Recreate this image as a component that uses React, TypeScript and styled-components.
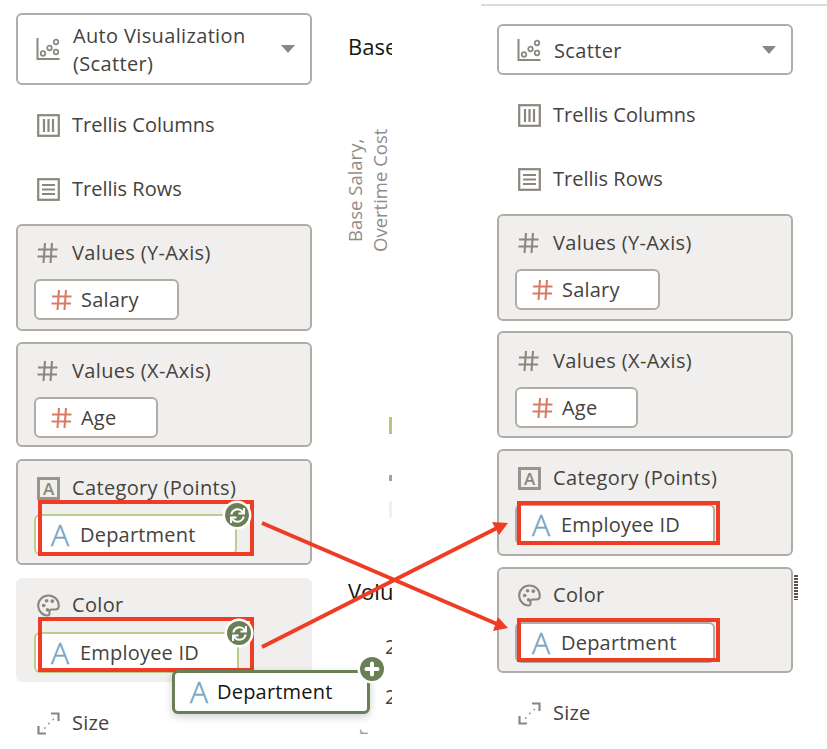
import * as React from 'react';
import styled, { createGlobalStyle } from 'styled-components';
import { FaSync } from 'react-icons/fa';

const Global = createGlobalStyle`
  html, body {
    margin: 0;
    height: 749px;
    overflow: hidden;
    background: #fff;
    font-family: 'Open Sans', 'Noto Sans', sans-serif;
  }
`;

const Page = styled.div`
  position: relative;
  display: flex;
  align-items: flex-start;
  width: 827px;
  height: 749px;
  overflow: hidden;
`;

const Panel = styled.div`
  display: flex;
  flex-direction: column;
  flex: none;
  width: 296px;
  margin-left: 16px;
  padding-top: 13px;
`;

const RightPanel = styled(Panel)`
  width: 330px;
  margin-left: 89px;
  margin-top: 4px;
  padding: 18px 0 0 16px;
  border-top: 2px solid #dcdad5;
`;

const Select = styled.div<{ $tall?: boolean }>`
  display: flex;
  align-items: center;
  box-sizing: border-box;
  width: 296px;
  height: ${p => (p.$tall ? 72 : 51)}px;
  margin-bottom: 8px;
  padding: 0 15px 0 18px;
  background: #fff;
  border: 2px solid #b0ada6;
  border-radius: 6px;
`;

const Label = styled.span`
  font-size: 20px;
  line-height: 30px;
  letter-spacing: 0.2px;
  color: #45423e;
`;

const SelectLabel = styled(Label)`
  flex: 1;
  margin-left: 13px;
  padding-top: 2px;
  line-height: 28px;
  letter-spacing: 0.35px;
`;

const Caret = styled.div`
  width: 0;
  height: 0;
  border-left: 7.5px solid transparent;
  border-right: 7.5px solid transparent;
  border-top: 8px solid #8a877f;
`;

const Row = styled.div`
  display: flex;
  align-items: center;
  flex: none;
  height: 64px;
  padding-left: 21px;
  gap: 12px;
`;

const RowLabel = styled(Label)`
  letter-spacing: 0;
`;

const Card = styled.div<{ $height: number; $gap: number; $flat?: boolean }>`
  position: relative;
  box-sizing: border-box;
  width: 296px;
  height: ${p => p.$height}px;
  margin-top: ${p => p.$gap}px;
  background: #f0efed;
  border: 2px solid ${p => (p.$flat ? 'transparent' : '#b0ada6')};
  border-radius: 6px;
`;

const CardHead = styled(Row)<{ $top?: number }>`
  height: 30px;
  padding-left: 19px;
  margin-top: ${p => p.$top ?? 12}px;
`;

const HeadLabel = styled(Label)`
  letter-spacing: 0.35px;
`;

const HeadSlot = styled.div`
  display: flex;
  flex: none;
  width: 23px;
`;

const Pill = styled.div<{ $width: number; $top?: number; $tone?: 'plain' | 'drop' }>`
  position: relative;
  display: flex;
  align-items: center;
  gap: 9px;
  box-sizing: border-box;
  width: ${p => p.$width}px;
  height: 41px;
  margin: ${p => p.$top ?? 11}px 0 0 16px;
  padding-left: 15px;
  background: #fff;
  border: 2px solid ${p => (p.$tone === 'drop' ? '#b9cd8c' : '#b0ada6')};
  border-radius: 6px;
`;

const TypeLetter = styled.span`
  flex: none;
  width: 20px;
  font-size: 30px;
  font-weight: 300;
  line-height: 32px;
  color: #74a5c0;
  -webkit-text-stroke: 0.5px #74a5c0;
`;

const BoxedLetter = styled.span`
  display: flex;
  align-items: center;
  justify-content: center;
  box-sizing: border-box;
  width: 23px;
  height: 23px;
  border: 3px solid #98958d;
  font-size: 17px;
  font-weight: 600;
  line-height: 17px;
  color: #8a877f;
`;

const Highlight = styled.div<{ $left: number; $top: number; $width: number; $height: number }>`
  position: absolute;
  box-sizing: border-box;
  left: ${p => p.$left}px;
  top: ${p => p.$top}px;
  width: ${p => p.$width}px;
  height: ${p => p.$height}px;
  border: 4px solid #ee3d24;
  pointer-events: none;
`;

const Badge = styled.div<{ $left: number; $top: number }>`
  position: absolute;
  z-index: 3;
  left: ${p => p.$left}px;
  top: ${p => p.$top}px;
  display: flex;
  align-items: center;
  justify-content: center;
  width: 24px;
  height: 24px;
  border-radius: 50%;
  background: #6b7f56;
  box-shadow: 0 0 0 2.5px #fff;
  color: #fff;
`;

const Ghost = styled.div`
  position: absolute;
  z-index: 2;
  left: 136px;
  top: 36px;
  display: flex;
  align-items: center;
  gap: 7px;
  box-sizing: border-box;
  width: 198px;
  height: 44px;
  padding-left: 15px;
  background: #fff;
  border: 3px solid #6b7f56;
  border-radius: 6px;
  box-shadow: 0 3px 8px rgba(0, 0, 0, 0.18);
`;

const GhostLabel = styled(Label)`
  color: #161513;
`;

const Grip = styled.div`
  position: absolute;
  left: calc(100% + 3px);
  top: 6px;
  width: 4px;
  height: 25px;
  background: repeating-linear-gradient(180deg, #55524e 0 2px, transparent 2px 3px);
`;

const ChartStrip = styled.div`
  display: flex;
  flex-direction: column;
  flex: none;
  width: 47px;
  height: 749px;
  margin-left: 33px;
  overflow: hidden;
`;

const ChartTitle = styled.div<{ $gap: number }>`
  margin: ${p => p.$gap}px 0 0 3px;
  font-size: 22px;
  line-height: 26px;
  color: #161513;
  white-space: nowrap;
`;

const AxisLabel = styled.div`
  flex: none;
  height: 125px;
  margin-top: 69px;
  margin-left: -3px;
  writing-mode: vertical-rl;
  transform: rotate(180deg);
  align-self: flex-start;
  text-align: center;
  font-size: 18.5px;
  line-height: 25px;
  color: #8f8d88;
  white-space: nowrap;
`;

const Tick = styled.div<{ $gap: number; $height: number; $color: string }>`
  flex: none;
  align-self: flex-end;
  width: 3px;
  height: ${p => p.$height}px;
  margin-top: ${p => p.$gap}px;
  background: ${p => p.$color};
`;

const AxisValue = styled.div<{ $gap: number }>`
  flex: none;
  margin: ${p => p.$gap}px 0 0 40px;
  font-size: 20px;
  line-height: 20px;
  color: #45423e;
`;

const AxisStub = styled.div`
  flex: none;
  height: 11px;
  margin: 17px 0 0 12px;
  overflow: hidden;
  writing-mode: vertical-rl;
  transform: rotate(180deg);
  align-self: flex-start;
  font-size: 14px;
  line-height: 11px;
  color: #8f8d88;
`;

const Arrows = styled.svg`
  position: absolute;
  z-index: 4;
  left: 0;
  top: 0;
  pointer-events: none;
`;

const stroke = '#8a877f';

const ScatterIcon = () => (
  <svg width="24" height="24" viewBox="0 0 24 24" fill="none" stroke={stroke} style={{ flex: 'none' }}>
    <path d="M1.5 1v21h22" strokeWidth="2" />
    <circle cx="7" cy="16.5" r="2.3" strokeWidth="1.7" />
    <circle cx="13.5" cy="11" r="2.3" strokeWidth="1.7" />
    <circle cx="20" cy="5" r="2.3" strokeWidth="1.7" />
    <circle cx="20" cy="15" r="2.3" strokeWidth="1.7" />
  </svg>
);

const ColumnsIcon = () => (
  <svg width="23" height="23" viewBox="0 0 23 23" fill="none" stroke={stroke} strokeWidth="2.2" style={{ flex: 'none' }}>
    <rect x="1.2" y="1.2" width="20.6" height="20.6" />
    <path d="M7 5v13M11.5 5v13M16 5v13" />
  </svg>
);

const RowsIcon = () => (
  <svg width="23" height="23" viewBox="0 0 23 23" fill="none" stroke={stroke} strokeWidth="2.2" style={{ flex: 'none' }}>
    <rect x="1.2" y="1.2" width="20.6" height="20.6" />
    <path d="M5 7h13M5 11.5h13M5 16h13" />
  </svg>
);

const HashIcon = ({ color = stroke }: { color?: string }) => (
  <svg width="21" height="22" viewBox="0 0 21 22" fill="none" stroke={color} strokeWidth="2.1" style={{ flex: 'none' }}>
    <path d="M8 1L6.5 21M15 1L13.5 21M1 7.5h19.5M.5 14.5h19.5" />
  </svg>
);

const PaletteIcon = () => (
  <svg width="23" height="23" viewBox="0 0 24 24" fill="none" style={{ flex: 'none' }}>
    <path
      d="M12 1.5C6 1.5 1.2 6.2 1.2 12c0 5.6 4.6 10.4 9.6 10.4 2 0 2.6-1.3 2.2-2.8-.5-2 .4-3.4 2.6-3.4h3.2c2.2 0 3.9-1.6 3.9-4C22.7 6 17.8 1.5 12 1.5z"
      stroke={stroke}
      strokeWidth="2.2"
    />
    <circle cx="7" cy="12" r="1.9" fill={stroke} />
    <circle cx="10" cy="7" r="1.9" fill={stroke} />
    <circle cx="16" cy="7.5" r="1.9" fill={stroke} />
    <circle cx="11" cy="16.5" r="1.9" fill={stroke} />
  </svg>
);

const SizeIcon = () => (
  <svg width="23" height="23" viewBox="0 0 23 23" fill="none" stroke={stroke} strokeWidth="2.2" style={{ flex: 'none' }}>
    <path d="M14 1.5h7.5V9M1.5 14v7.5H9" />
    <path d="M7 16h1.6M11 11.5h1.6M15.5 7.5h1.6" strokeWidth="1.6" />
  </svg>
);

const PlusGlyph = () => (
  <svg width="16" height="16" viewBox="0 0 16 16" stroke="#fff" strokeWidth="4" strokeLinecap="round">
    <path d="M8 2.5v11M2.5 8h11" />
  </svg>
);

const Measure = () => <TypeLetter>A</TypeLetter>;

const ValueCard = ({ title, pill, width, height, gap, headTop }: { title: string; pill: string; width: number; height: number; gap: number; headTop?: number }) => (
  <Card $height={height} $gap={gap}>
    <CardHead $top={headTop}>
      <HeadSlot>
        <HashIcon />
      </HeadSlot>
      <HeadLabel>{title}</HeadLabel>
    </CardHead>
    <Pill $width={width}>
      <HashIcon color="#d97c66" />
      <Label>{pill}</Label>
    </Pill>
  </Card>
);

const Spacer = styled.div`
  height: 3px;
  flex: none;
`;

const Trellis = () => (
  <>
    <Row>
      <ColumnsIcon />
      <RowLabel>Trellis Columns</RowLabel>
    </Row>
    <Row>
      <RowsIcon />
      <RowLabel>Trellis Rows</RowLabel>
    </Row>
    <Spacer />
  </>
);

const SizeRow = styled(Row)<{ $gap: number }>`
  margin-top: ${p => p.$gap}px;
`;

const LeftColumn = () => (
  <Panel>
    <Select $tall>
      <ScatterIcon />
      <SelectLabel>Auto Visualization (Scatter)</SelectLabel>
      <Caret />
    </Select>
    <Trellis />
    <ValueCard title="Values (Y-Axis)" pill="Salary" width={145} height={107} gap={0} />
    <ValueCard title="Values (X-Axis)" pill="Age" width={124} height={105} gap={11} />
    <Card $height={106} $gap={12}>
      <CardHead>
        <BoxedLetter>A</BoxedLetter>
        <HeadLabel>Category (Points)</HeadLabel>
      </CardHead>
      <Pill $width={203} $tone="drop">
        <Measure />
        <Label>Department</Label>
        <Highlight $left={2} $top={-16} $width={216} $height={56} />
        <Badge $left={189} $top={-13}>
          <FaSync size={15} />
        </Badge>
      </Pill>
    </Card>
    <Card $height={104} $gap={13} $flat>
      <CardHead $top={10}>
        <PaletteIcon />
        <HeadLabel>Color</HeadLabel>
      </CardHead>
      <Pill $width={205} $top={12} $tone="drop">
        <Measure />
        <Label>Employee ID</Label>
        <Highlight $left={2} $top={-17} $width={216} $height={55} />
        <Badge $left={191} $top={-13}>
          <FaSync size={15} />
        </Badge>
        <Ghost>
          <Measure />
          <GhostLabel>Department</GhostLabel>
          <Badge $left={185} $top={-16}>
            <PlusGlyph />
          </Badge>
        </Ghost>
      </Pill>
    </Card>
    <SizeRow $gap={9}>
      <SizeIcon />
      <Label>Size</Label>
    </SizeRow>
  </Panel>
);

const RightColumn = () => (
  <RightPanel>
    <Select>
      <ScatterIcon />
      <SelectLabel>Scatter</SelectLabel>
      <Caret />
    </Select>
    <Trellis />
    <ValueCard title="Values (Y-Axis)" pill="Salary" width={145} height={107} gap={0} />
    <ValueCard title="Values (X-Axis)" pill="Age" width={123} height={107} gap={10} headTop={13} />
    <Card $height={107} $gap={11}>
      <CardHead>
        <BoxedLetter>A</BoxedLetter>
        <HeadLabel>Category (Points)</HeadLabel>
      </CardHead>
      <Pill $width={200}>
        <Measure />
        <Label>Employee ID</Label>
        <Highlight $left={0} $top={-5} $width={203} $height={44} />
      </Pill>
    </Card>
    <Card $height={106} $gap={11}>
      <CardHead $top={11}>
        <PaletteIcon />
        <HeadLabel>Color</HeadLabel>
      </CardHead>
      <Pill $width={200} $top={12}>
        <Measure />
        <Label>Department</Label>
        <Highlight $left={0} $top={-6} $width={203} $height={44} />
      </Pill>
      <Grip />
    </Card>
    <SizeRow $gap={8}>
      <SizeIcon />
      <Label>Size</Label>
    </SizeRow>
  </RightPanel>
);

const ChartColumn = () => (
  <ChartStrip>
    <ChartTitle $gap={33}>Base</ChartTitle>
    <AxisLabel>
      Base Salary,
      <br />
      Overtime Cost
    </AxisLabel>
    <Tick $gap={164} $height={17} $color="#b4c77f" />
    <Tick $gap={41} $height={6} $color="#a3a19c" />
    <Tick $gap={20} $height={17} $color="#f1f0ee" />
    <ChartTitle $gap={60}>Volu</ChartTitle>
    <AxisValue $gap={33}>2</AxisValue>
    <AxisValue $gap={30}>2</AxisValue>
    <AxisStub>r</AxisStub>
  </ChartStrip>
);

export default function App() {
  return (
    <>
      <Global />
      <Page>
        <LeftColumn />
        <ChartColumn />
        <RightColumn />
        <Arrows width="827" height="749" viewBox="0 0 827 749" fill="none">
          <path d="M262 523L497 624" stroke="#ee3d24" strokeWidth="4" />
          <path d="M508 628L493 631L498 617z" fill="#ee3d24" />
          <path d="M262 647L497 528" stroke="#ee3d24" strokeWidth="4" />
          <path d="M508 523L499 535L492 522z" fill="#ee3d24" />
        </Arrows>
      </Page>
    </>
  );
}
